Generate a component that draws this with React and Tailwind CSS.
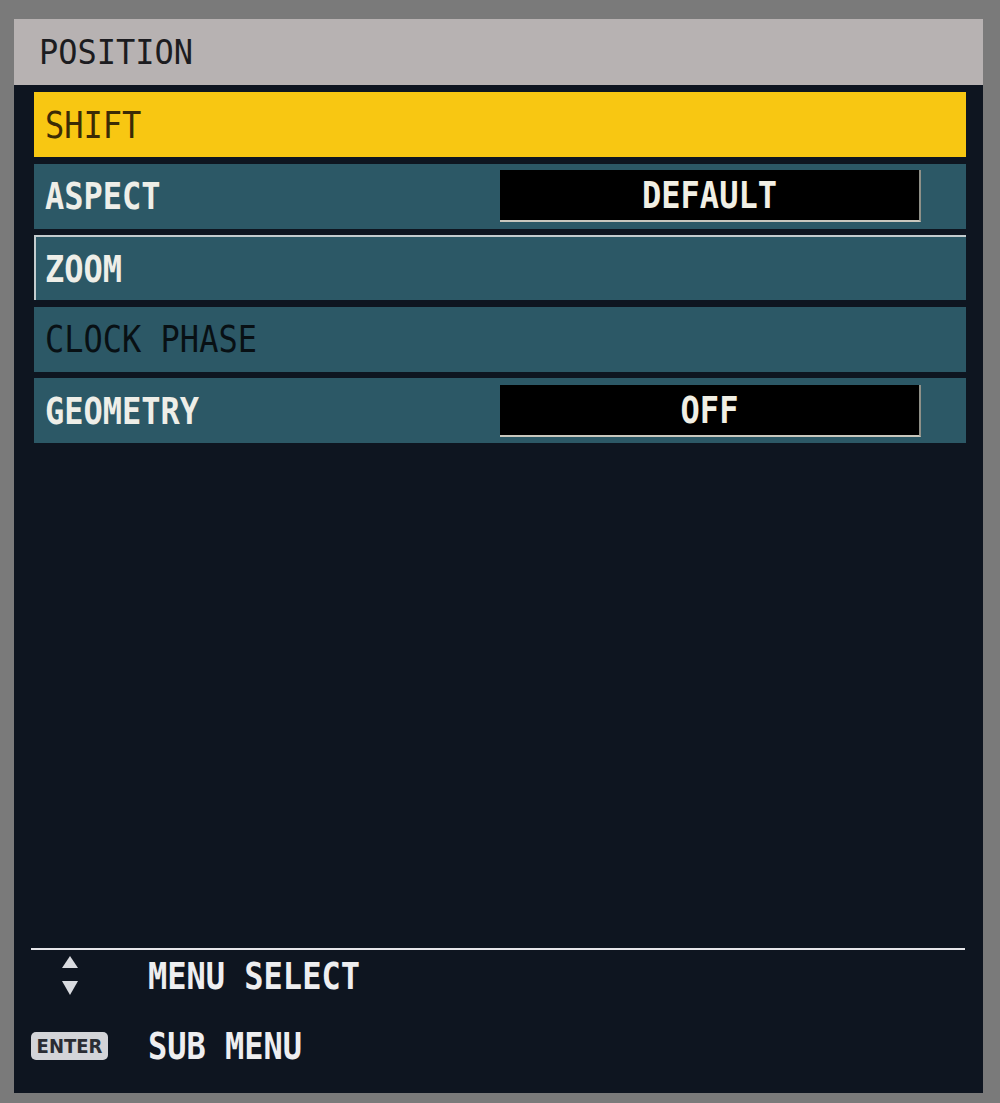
import React from 'react';

const mono = "font-['DejaVu_Sans_Mono',monospace]";

const Label = ({ children, className = '' }) => (
  <span className={`inline-block scale-y-[1.16] text-[32px] leading-none ${className}`}>{children}</span>
);

const ValueBox = ({ value }) => (
  <div className="ml-auto mr-[45px] flex h-[52px] w-[421px] items-center justify-center border-b-2 border-r-2 border-b-[#c9c7bd] border-r-[#8f9088] bg-black">
    <Label className="font-bold text-[#f1efe4]">{value}</Label>
  </div>
);

const Row = ({ label, value, variant = 'normal' }) => {
  if (variant === 'selected') {
    return (
      <div className="flex h-[65px] items-center bg-[#f8c712] pl-[11px]">
        <Label className="text-[#3b2b05]">{label}</Label>
      </div>
    );
  }
  const text = variant === 'disabled' ? 'text-[#081014]' : 'font-bold text-[#eeeee8]';
  const focus = variant === 'focus' ? 'border-l-2 border-t-2 border-[#c4ccce] pl-[9px]' : 'pl-[11px]';
  return (
    <div className={`flex h-[65px] items-center bg-[#2c5866] ${focus}`}>
      <Label className={text}>{label}</Label>
      {value && <ValueBox value={value} />}
    </div>
  );
};

const Arrows = () => (
  <svg width="18" height="42" viewBox="0 0 18 42">
    <polygon points="9,1 17,13 1,13" fill="#d9dbe0" />
    <polygon points="1,26 17,26 9,40" fill="#d9dbe0" />
  </svg>
);

export default function App() {
  return (
    <div className={`min-h-[1103px] w-[1000px] bg-[#7a7a7a] pl-[14px] pt-[19px] ${mono}`}>
      <div className="flex h-[1074px] w-[969px] flex-col bg-[#0e1520]">
        <div className="flex h-[66px] items-center bg-[#b7b2b2] pl-[25px]">
          <span className="inline-block scale-y-[1.08] text-[32px] leading-none text-[#1c1c20]">POSITION</span>
        </div>

        <div className="flex flex-col gap-[6.5px] pl-[20px] pr-[17px] pt-[7px]">
          <Row label="SHIFT" variant="selected" />
          <Row label="ASPECT" value="DEFAULT" />
          <Row label="ZOOM" variant="focus" />
          <Row label="CLOCK PHASE" variant="disabled" />
          <Row label="GEOMETRY" value="OFF" />
        </div>

        <div className="mt-auto pb-[29px] pl-[17px] pr-[18px]">
          <div className="h-[2px] bg-[#e6e6ea]" />
          <div className="mt-[4px] flex h-[44px] items-center">
            <div className="w-[117px] pl-[30px]">
              <Arrows />
            </div>
            <Label className="font-bold text-[#eeeef0]">MENU SELECT</Label>
          </div>
          <div className="mt-[30px] flex h-[36px] items-center">
            <div className="flex w-[117px] items-center">
              <span className="flex h-[28px] w-[77px] items-center justify-center rounded-[5px] bg-[#d3d4d8] text-[20px] font-bold leading-none text-[#2a2c33] font-['DejaVu_Sans_Condensed','DejaVu_Sans',sans-serif]">ENTER</span>
            </div>
            <Label className="font-bold text-[#eeeef0]">SUB MENU</Label>
          </div>
        </div>
      </div>
    </div>
  );
}
